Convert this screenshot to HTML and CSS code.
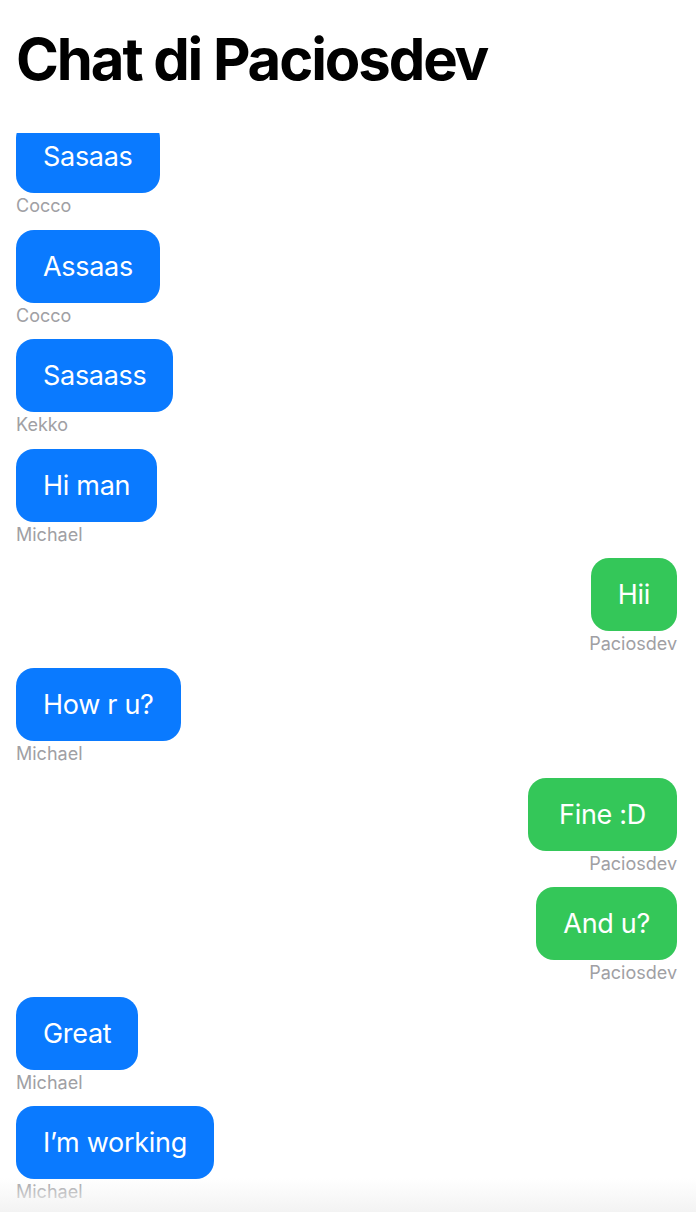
FILE: index.html
```html
<!DOCTYPE html>
<html lang="it">
<head>
<meta charset="utf-8">
<title>Chat di Paciosdev</title>
<link rel="stylesheet" href="styles.css">
</head>
<body>
<div class="screen">
  <header class="header">
    <h1 class="title">Chat di Paciosdev</h1>
  </header>
  <main class="scroll">
    <div class="list">
      <div class="msg in"><div class="bubble">Sasaas</div><div class="author">Cocco</div></div>
      <div class="msg in"><div class="bubble">Assaas</div><div class="author">Cocco</div></div>
      <div class="msg in"><div class="bubble">Sasaass</div><div class="author">Kekko</div></div>
      <div class="msg in"><div class="bubble">Hi man</div><div class="author">Michael</div></div>
      <div class="msg out"><div class="bubble">Hii</div><div class="author">Paciosdev</div></div>
      <div class="msg in"><div class="bubble">How r u?</div><div class="author">Michael</div></div>
      <div class="msg out"><div class="bubble wide">Fine :D</div><div class="author">Paciosdev</div></div>
      <div class="msg out"><div class="bubble">And u?</div><div class="author">Paciosdev</div></div>
      <div class="msg in"><div class="bubble">Great</div><div class="author">Michael</div></div>
      <div class="msg in"><div class="bubble">I’m working</div><div class="author">Michael</div></div>
    </div>
  </main>
  <div class="bottom-fade"></div>
</div>
</body>
</html>
```
FILE: styles.css
```css
* { box-sizing: border-box; }
html, body {
  margin: 0;
  padding: 0;
  background: #ffffff;
}
body {
  font-family: Inter, "Liberation Sans", sans-serif;
  color: #000;
}
.screen {
  position: relative;
  width: 696px;
  height: 1212px;
  overflow: hidden;
  display: flex;
  flex-direction: column;
}
.header {
  padding: 23px 16px 0;
  height: 133px;
  flex: none;
}
.title {
  margin: 0;
  font-size: 58px;
  line-height: 72px;
  font-weight: 700;
  letter-spacing: -2.1px;
}
.scroll {
  flex: 1;
  overflow: hidden;
  padding: 0 19px 0 16px;
}
.list {
  display: flex;
  flex-direction: column;
  gap: 14.6px;
  margin-top: -13px;
}
.msg {
  display: flex;
  flex-direction: column;
  align-items: flex-start;
}
.msg.out { align-items: flex-end; }
.bubble {
  height: 73px;
  line-height: 73px;
  padding: 0 27px;
  border-radius: 18px;
  background: #0a7aff;
  color: #fff;
  font-size: 27px;
  letter-spacing: -0.3px;
}
.bubble.wide { padding: 0 31px; }
.msg.out .bubble { background: #34c759; }
.author {
  margin-top: 2px;
  height: 20px;
  line-height: 21px;
  font-size: 18px;
  color: #a0a0a4;
}
.bottom-fade {
  position: absolute;
  left: 0;
  right: 0;
  bottom: 0;
  height: 34px;
  background: linear-gradient(to bottom, rgba(246,246,246,0), #f3f3f3);
  pointer-events: none;
}
```
